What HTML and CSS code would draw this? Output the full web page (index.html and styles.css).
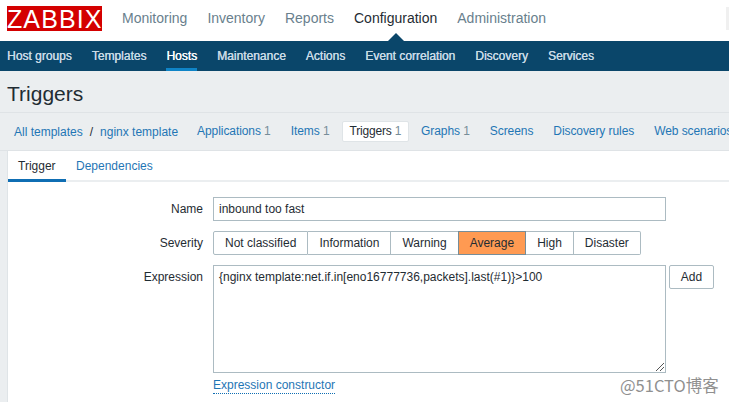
FILE: index.html
```html
<!DOCTYPE html>
<html lang="en">
<head>
<meta charset="utf-8">
<title>Triggers</title>
<link rel="stylesheet" href="styles.css">
</head>
<body>
<header class="top">
  <div class="logo">ZABBIX</div>
  <nav class="main-nav">
    <a>Monitoring</a><a>Inventory</a><a>Reports</a><a class="on">Configuration</a><a>Administration</a>
  </nav>
  <div class="search-edge"></div>
</header>
<nav class="sub-nav">
  <a>Host groups</a><a>Templates</a><a class="on">Hosts</a><a>Maintenance</a><a>Actions</a><a>Event correlation</a><a>Discovery</a><a>Services</a>
</nav>
<main class="page">
  <h1>Triggers</h1>
  <div class="crumbs">
    <a class="first">All templates</a><span class="sep">/</span><a class="tpl">nginx template</a>
    <a class="crumb">Applications <i>1</i></a>
    <a class="crumb">Items <i>1</i></a>
    <a class="crumb cur">Triggers <i>1</i></a>
    <a class="crumb">Graphs <i>1</i></a>
    <a class="crumb">Screens</a>
    <a class="crumb">Discovery rules</a>
    <a class="crumb">Web scenarios</a>
  </div>
  <section class="card">
    <div class="tabs"><a class="tab on">Trigger</a><a class="tab">Dependencies</a></div>
    <form class="form">
      <label class="lbl">Name</label>
      <div class="field name">inbound too fast</div>
      <label class="lbl">Severity</label>
      <div class="sev">
        <span>Not classified</span><span>Information</span><span>Warning</span><span class="sel">Average</span><span>High</span><span>Disaster</span>
      </div>
      <label class="lbl">Expression</label>
      <div class="exp-col">
        <div class="exp-row">
          <div class="field area">{nginx template:net.if.in[eno16777736,packets].last(#1)}&gt;100
            <svg class="grip" width="9" height="9" viewBox="0 0 9 9"><path d="M1 9 9 1M5 9 9 5" stroke="#555" fill="none"/></svg>
          </div>
          <div class="add">Add</div>
        </div>
        <a class="constructor">Expression constructor</a>
      </div>
    </form>
  </section>
</main>
<div class="mark">@51CTO博客</div>
</body>
</html>
```
FILE: styles.css
```css
* { box-sizing: border-box; }
html, body { margin: 0; height: 402px; overflow: hidden; }
body { position: relative; width: 729px; background: #ebeef0; font-family: "Liberation Sans", Arial, sans-serif; font-size: 12px; color: #1f2c33; }
a { text-decoration: none; }
i { font-style: normal; color: #768d99; }

.top { height: 41px; background: #fff; display: flex; align-items: flex-start; padding-left: 7px; position: relative; }
.logo { width: 95px; height: 25px; margin-top: 6px; background: #d40000; color: #fff; font-size: 25px; line-height: 26px; text-align: center; letter-spacing: 1.1px; white-space: nowrap; }
.main-nav { display: flex; gap: 20px; margin-left: 20px; padding-top: 10px; font-size: 14px; line-height: 17px; }
.main-nav a { color: #69808d; }
.main-nav a.on { color: #1f2c33; position: relative; }
.main-nav a.on::after { content: ""; position: absolute; left: 34px; top: 23px; border: 8px solid transparent; border-top: 0; border-bottom: 8px solid #0a466a; }
.search-edge { position: absolute; right: 0; top: 7px; width: 3px; height: 23px; background: #f0f0f0; }

.sub-nav { height: 30px; background: #0a466a; display: flex; gap: 20px; padding-left: 7px; line-height: 30px; }
.sub-nav a { color: #c9dbe6; height: 30px; text-shadow: .3px 0 currentColor; }
.sub-nav a.on { color: #fff; border-bottom: 3px solid #0f84c7; }

.page { padding: 0 0 0 7px; }
h1 { margin: 0; height: 41px; padding-top: 10px; font-size: 21px; line-height: 25px; font-weight: 400; color: #1f2c33; }
.crumbs { margin-left: -7px; height: 39px; border-top: 1px solid #dfe3e6; border-bottom: 1px solid #dfe3e6; display: flex; align-items: center; padding-left: 14px; white-space: nowrap; overflow: hidden; }
.crumbs a { color: #1f76b5; }
.sep { margin: 0 7px; color: #1f2c33; }
.tpl { margin-right: 11px; }
.crumb { margin-left: 4px; padding: 3px 8px; flex: none; line-height: 15px; letter-spacing: -.08px; }
.tpl + .crumb { margin-left: 0; }
.crumbs a.cur { background: #fff; color: #1f2c33; border-radius: 2px; border: 1px solid #dfe4e7; padding: 2px 7px; letter-spacing: -.2px; }

.card { margin-left: 1px; background: #fff; height: 251px; box-shadow: -1px 0 #dfe4e7; }
.tabs { height: 31px; display: flex; border-bottom: 2px solid #ebeef0; }
.tab { padding: 0 10px; line-height: 30px; color: #1f76b5; height: 31px; }
.tab.on { color: #1f2c33; border-bottom: 3px solid #0f6eb3; width: 58px; }

.form { display: grid; grid-template-columns: 195px auto; column-gap: 10px; row-gap: 10px; padding-top: 15px; }
.lbl { text-align: right; line-height: 24px; }
.field { border: 1px solid #acbbc2; background: #fff; padding: 0 5px; }
.name { width: 453px; height: 24px; line-height: 22px; }
.sev { display: flex; height: 24px; }
.sev span { border: 1px solid #acbbc2; border-left-width: 0; line-height: 22px; padding: 0 11px; }
.sev span:first-child { border-left-width: 1px; border-radius: 2px 0 0 2px; }
.sev span:last-child { border-radius: 0 2px 2px 0; }
.sev .sel { background: #ff9a52; border-color: #768d99; border-left-width: 1px; margin-left: -1px; }
.exp-row { display: flex; gap: 3px; align-items: flex-start; }
.area { position: relative; width: 453px; height: 108px; padding-top: 4px; line-height: 15px; }
.grip { position: absolute; right: 1px; bottom: 1px; }
.add { width: 45px; height: 24px; border: 1px solid #acbbc2; border-radius: 2px; text-align: center; line-height: 22px; }
.constructor { display: inline-block; margin-top: 5px; color: #1f76b5; line-height: 15px; border-bottom: 1px dotted #0f6eb3; }

.mark { position: absolute; left: 620px; top: 375px; font-family: "Noto Sans CJK SC", "Liberation Sans", sans-serif; font-size: 16.5px; line-height: 20px; color: #909090; text-shadow: 0 0 2px #fff; }
```
